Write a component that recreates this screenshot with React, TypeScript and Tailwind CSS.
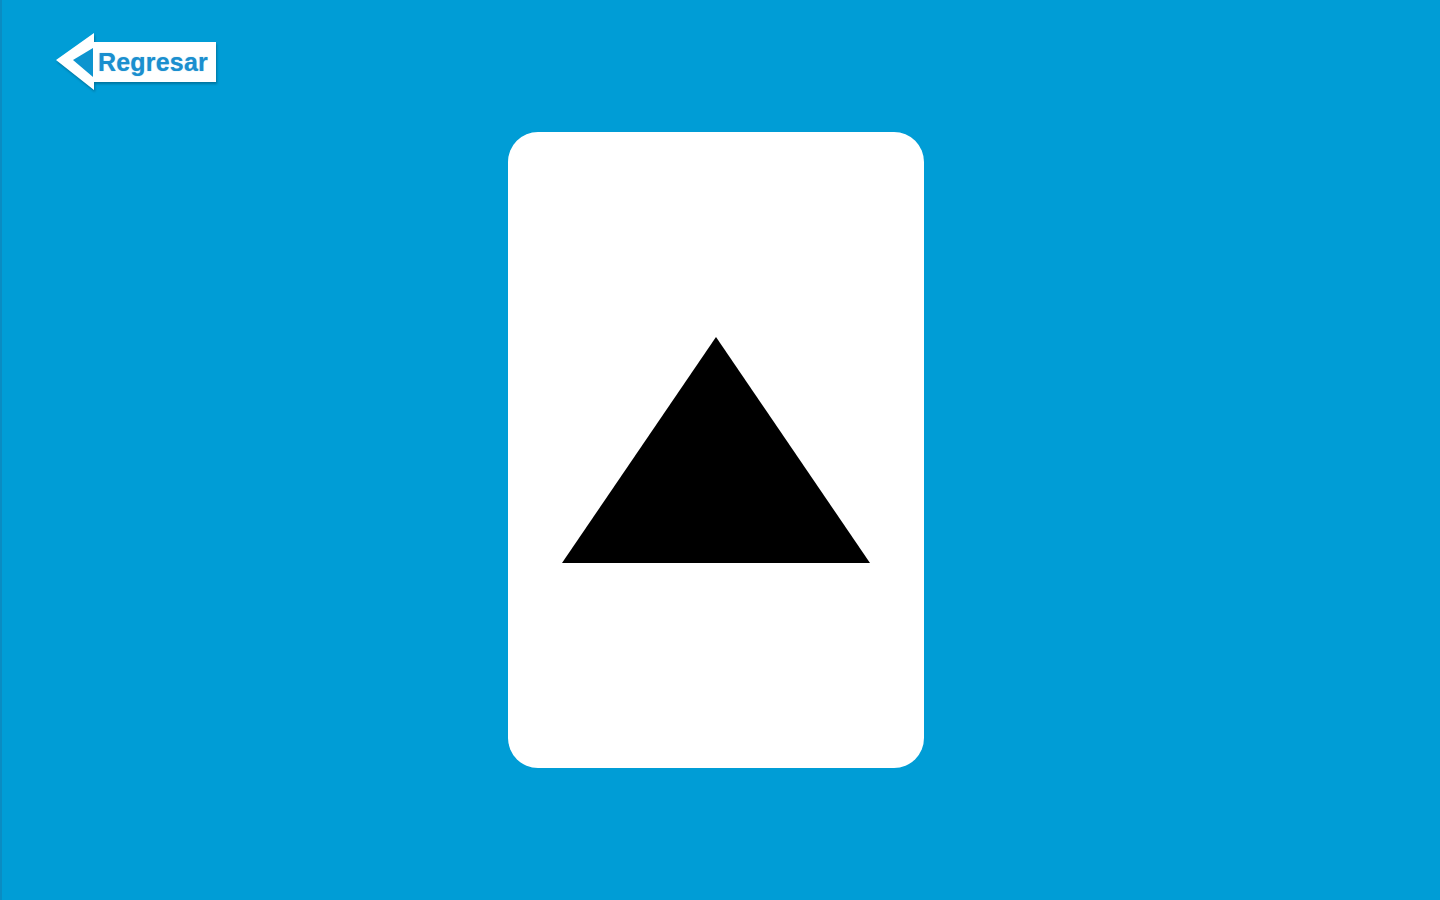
export default function App() {
  return (
    <div className="relative flex h-[900px] w-[1440px] items-center justify-center overflow-hidden border-l-2 border-[#0a8cc2] bg-[#009dd6] font-['Liberation_Sans',Arial,sans-serif]">
      {/* back button */}
      <button className="absolute left-[50px] top-[31px] h-[62px] w-[168px]">
        <svg width="168" height="62" viewBox="0 0 168 62" className="absolute inset-0 drop-shadow-[1px_2px_1px_rgba(0,0,0,0.25)]">
          <path d="M4 29 L42 2 L42 11 L164 11 L164 51 L42 51 L42 59 Z" fill="#ffffff" />
          <path d="M21 29 L41 17 L41 46 Z" fill="#0d94cf" />
        </svg>
        <span className="absolute left-[46px] top-[14px] text-[25px] font-bold leading-[34px] tracking-[0.2px] text-[#1a8fcf] [text-shadow:0_0_1px_rgba(26,143,207,0.6)]">
          Regresar
        </span>
      </button>

      {/* card */}
      <div className="mr-[10px] flex h-[636px] w-[416px] items-center justify-center rounded-[30px] bg-white">
        <svg width="308" height="226" viewBox="0 0 308 226">
          <polygon points="154,0 308,226 0,226" fill="#000000" />
        </svg>
      </div>
    </div>
  );
}
